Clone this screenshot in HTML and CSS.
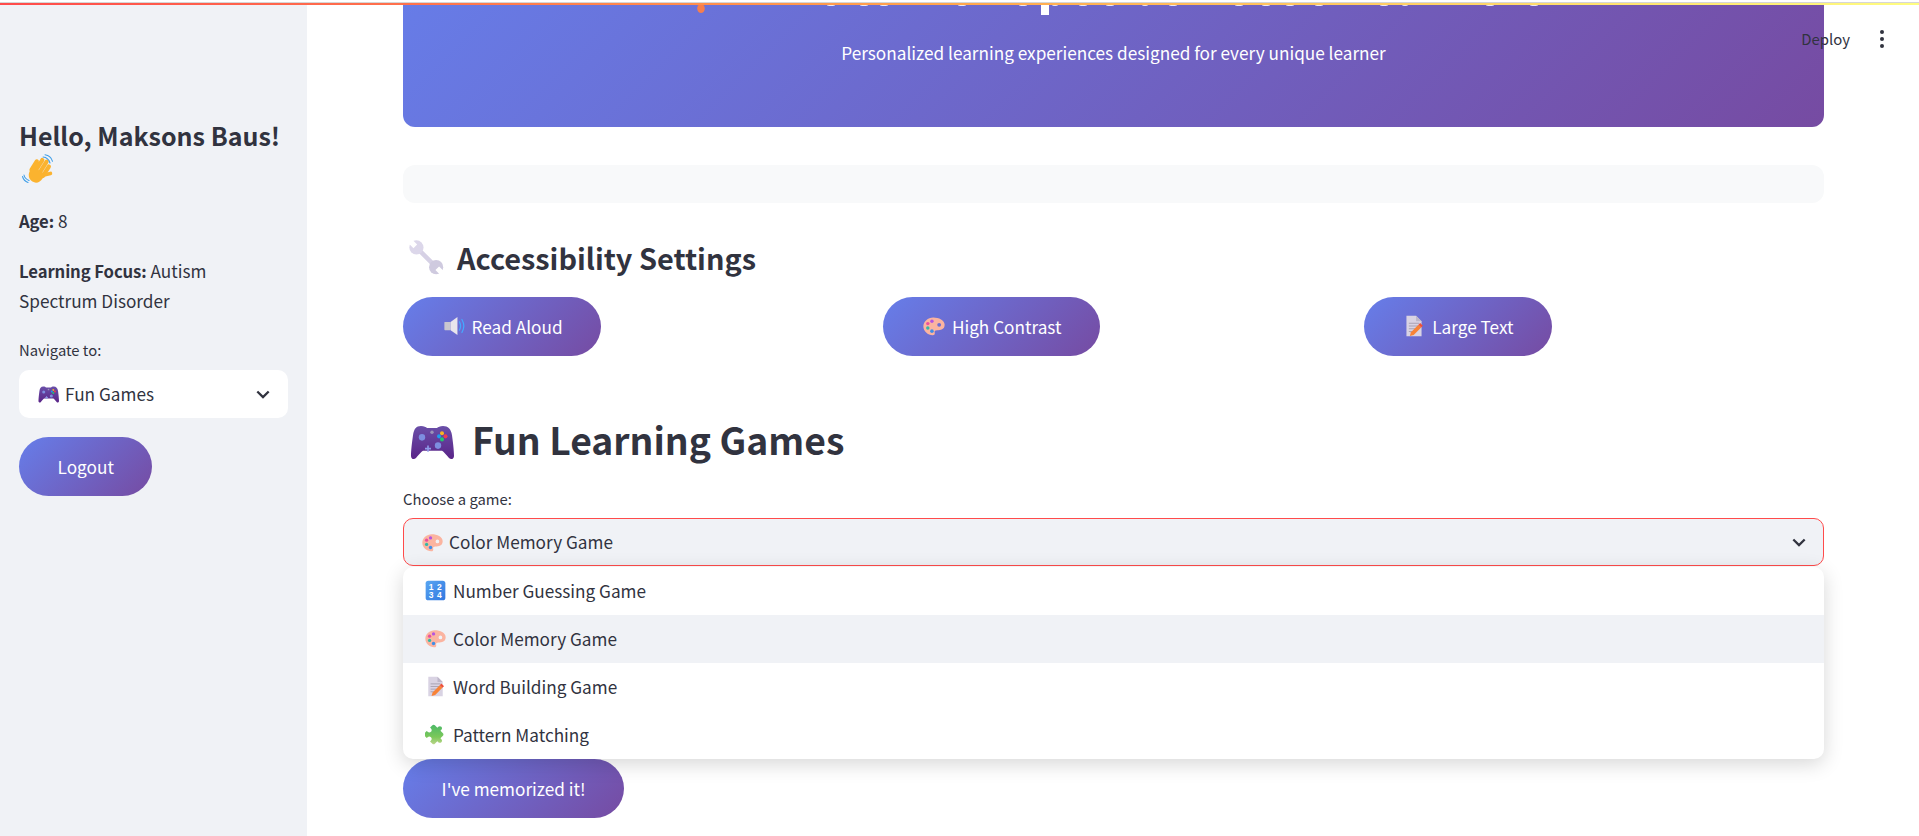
FILE: index.html
```html
<!DOCTYPE html>
<html lang="en">
<head>
<meta charset="utf-8">
<title>Fun Learning Games</title>
<link rel="stylesheet" href="styles.css">
</head>
<body>
<svg class="sprite" aria-hidden="true">
  <defs>
    <linearGradient id="padGrad" x1="0" y1="0" x2="0" y2="1"><stop offset="0" stop-color="#6a4fa8"/><stop offset="1" stop-color="#5a2488"/></linearGradient>
    <linearGradient id="numGrad" x1="0" y1="0" x2="1" y2="1"><stop offset="0" stop-color="#58a6f2"/><stop offset="1" stop-color="#3378e0"/></linearGradient>
    <linearGradient id="puzGrad" x1="0" y1="0" x2="1" y2="1"><stop offset="0" stop-color="#3fb56b"/><stop offset=".6" stop-color="#7cc85a"/><stop offset="1" stop-color="#d8dba0"/></linearGradient>
    <symbol id="i-wave" viewBox="0 0 32 32">
      <g transform="rotate(32 17 17)" stroke="#fbb32f" stroke-linecap="round" fill="none">
        <path d="M10 10v10M14 6v12M18.500 5v13M23 8v11" stroke-width="4.200"/>
        <path d="M9 20c0 6 3.500 9.500 8 9.500s7-3.500 7-8v-5H10z" fill="#fbb32f" stroke="none"/>
        <path d="M24 17l4-4" stroke-width="3.600"/>
      </g>
      <path d="M21 3c3 .3 6 2.500 7 6M23 .8c3.500.5 6.500 3 7.500 6.500M2 21c.5 2.500 2.500 4.500 5 5.500M.5 22.500c.8 3 3 5.200 5.500 6" fill="none" stroke="#3f9fe8" stroke-width="1.100" stroke-linecap="round"/>
    </symbol>
    <symbol id="i-wrench" viewBox="0 0 32 32">
      <path d="M8 8l17 17" stroke="#d6d1e5" stroke-width="4" stroke-linecap="round"/>
      <circle cx="7.500" cy="7.500" r="6.300" fill="#dcd7ea"/>
      <circle cx="25" cy="25" r="6.300" fill="#cfcadf"/>
      <path d="M6.500 6.500L0 0M26 26L32 32" stroke="#fff" stroke-width="4.600"/>
    </symbol>
    <symbol id="i-speaker" viewBox="0 0 32 32">
      <rect x="2" y="10" width="9" height="12" rx="1" fill="#c9c6cf"/>
      <path d="M11 10l10-7v26l-10-7z" fill="#e8e5ec"/>
      <path d="M24 10c2 4 2 8 0 12M27.500 6.500c3.500 6 3.500 13 0 19" fill="none" stroke="#45a8ff" stroke-width="1.800" stroke-linecap="round"/>
    </symbol>
    <symbol id="i-palette" viewBox="0 0 32 32">
      <path fill-rule="evenodd" d="M15 3.500C7 3.500.5 9.500.5 16.500S7 29.500 14 29.500c3 0 3.500-2 3-4-.6-2.300 1-3.500 3.500-3.500 5 0 11-1 11-8C31.500 7.500 23 3.500 15 3.500zM23.500 11.500a2.800 2.800 0 1 0 0 5.600 2.800 2.800 0 0 0 0-5.600z" fill="#fbb4a0"/>
      <circle cx="13" cy="9" r="2.500" fill="#b455e0"/><circle cx="7" cy="12.500" r="2.500" fill="#ec4f9c"/><circle cx="7" cy="19" r="2.500" fill="#35b8a5"/><circle cx="13" cy="23.500" r="2.600" fill="#3f8ee8"/>
    </symbol>
    <symbol id="i-doc" viewBox="0 0 32 32">
      <path d="M5 1h14l8 8v22H5z" fill="#d9d3e3"/><path d="M19 1l8 8h-8z" fill="#bdb6c9"/>
      <path d="M8.500 12h15M8.500 16h15M8.500 20h9M8.500 24h5" stroke="#a39cad" stroke-width="1.300"/>
      <path d="M10 30.500l1.500-5.500 11-11 4 4-11 11z" fill="#f88337"/><path d="M22.500 14l2.500-2.500 4 4-2.500 2.500z" fill="#ee4f3a"/>
    </symbol>
    <symbol id="i-pad" viewBox="0 0 44 34" preserveAspectRatio="none">
      <path d="M11 1c3 0 5 1 6 2h10c1-1 3-2 6-2 5 0 8 3 9 9 1 7 2 15 2 20 0 3-3 4-5 2-2-2-5-6-7-7H13c-2 1-5 5-7 7-2 2-5 1-5-2 0-5 1-13 2-20C4 4 6 1 11 1z" fill="url(#padGrad)"/>
      <circle cx="12" cy="12" r="3.200" fill="#7d8ee0"/><circle cx="28" cy="20" r="3.200" fill="#7d8ee0"/>
      <path d="M18 20v6M15 23h6" stroke="#8f9cea" stroke-width="1.600"/>
      <circle cx="22" cy="7" r="1.700" fill="#9a93b8"/>
      <circle cx="32" cy="8" r="2" fill="#f6b621"/><circle cx="29" cy="11" r="2" fill="#1f9cf0"/><circle cx="35.500" cy="11" r="2" fill="#ef3b4f"/><circle cx="32" cy="14" r="2" fill="#22c76f"/>
    </symbol>
    <symbol id="i-num" viewBox="0 0 32 32">
      <rect x="1" y="1" width="30" height="30" rx="4" fill="url(#numGrad)"/>
      <text x="9.500" y="14.500" class="num-text">1</text><text x="22" y="14.500" class="num-text">2</text>
      <text x="9.500" y="28" class="num-text">3</text><text x="22" y="28" class="num-text">4</text>
    </symbol>
    <symbol id="i-puz" viewBox="0 0 24 24">
      <path transform="rotate(45 12 12)" d="M20.500 11H19V7c0-1.100-.9-2-2-2h-4V3.500C13 2.120 11.880 1 10.500 1S8 2.120 8 3.500V5H4c-1.100 0-1.990.9-1.990 2v3.800H3.500c1.490 0 2.700 1.210 2.700 2.700s-1.210 2.700-2.700 2.700H2V20c0 1.100.9 2 2 2h3.800v-1.500c0-1.490 1.210-2.700 2.700-2.700 1.490 0 2.700 1.210 2.700 2.700V22H17c1.100 0 2-.9 2-2v-4h1.500c1.380 0 2.500-1.120 2.500-2.500S21.880 11 20.500 11z" fill="url(#puzGrad)"/>
    </symbol>
    <symbol id="i-chev" viewBox="0 0 16 10">
      <path d="M1.500 1.500l6.500 6.500 6.500-6.500" fill="none" stroke="#31333f" stroke-width="2.600"/>
    </symbol>
  </defs>
</svg>

<div class="top-strip"><div class="top-white"></div><div class="top-gray"></div><div class="top-rainbow"></div></div>

<svg class="title-marks" aria-hidden="true" width="1919" height="16" viewBox="0 0 1919 16">
  <ellipse cx="701" cy="8.500" rx="3.800" ry="4.500" fill="#f57e4e"/>
  <rect x="1041" y="5" width="8" height="10" fill="#fff"/>
  <g fill="#fff" fill-opacity=".85">
    <ellipse cx="831" cy="5" rx="4" ry="1"/><ellipse cx="864" cy="5" rx="4" ry="1"/><ellipse cx="884" cy="5" rx="4" ry="1"/><ellipse cx="962" cy="5" rx="4" ry="1"/><ellipse cx="1023" cy="5" rx="4" ry="1"/><ellipse cx="1055" cy="5" rx="3" ry="1"/><ellipse cx="1083" cy="5" rx="4" ry="1"/><ellipse cx="1110" cy="5" rx="4" ry="1"/><ellipse cx="1145" cy="5" rx="3" ry="1"/><ellipse cx="1173" cy="5" rx="4" ry="1"/><ellipse cx="1239" cy="5" rx="4" ry="1"/><ellipse cx="1266" cy="5" rx="4" ry="1"/><ellipse cx="1290" cy="5" rx="4" ry="1"/><ellipse cx="1319" cy="5" rx="4" ry="1"/><ellipse cx="1384" cy="5" rx="4" ry="1"/><ellipse cx="1405" cy="5" rx="3" ry="1"/><ellipse cx="1490" cy="5" rx="4" ry="1"/><ellipse cx="1534" cy="5" rx="4" ry="1"/>
  </g>
</svg>

<div class="toolbar">
  <span class="deploy">Deploy</span>
  <span class="kebab"><i></i><i></i><i></i></span>
</div>

<div class="app">
  <aside class="sidebar">
    <h3 class="hello">Hello, Maksons Baus!<br><svg class="ic-wave"><use href="#i-wave"/></svg></h3>
    <p class="info age"><strong>Age:</strong> 8</p>
    <p class="info focus"><strong>Learning Focus:</strong> Autism Spectrum Disorder</p>
    <label class="field-label nav-label">Navigate to:</label>
    <div class="select select-white">
      <svg class="ic-pad-small"><use href="#i-pad"/></svg>
      <span class="select-text-near">Fun Games</span>
      <svg class="chev"><use href="#i-chev"/></svg>
    </div>
    <button class="btn logout">Logout</button>
  </aside>

  <main class="main">
    <section class="banner">
      <p class="subtitle">Personalized learning experiences designed for every unique learner</p>
    </section>
    <div class="empty-bar"></div>

    <h2 class="h-access"><svg class="ic-wrench"><use href="#i-wrench"/></svg>Accessibility Settings</h2>
    <div class="btn-row">
      <div><button class="btn btn-icon"><svg class="ic-btn"><use href="#i-speaker"/></svg>Read Aloud</button></div>
      <div><button class="btn btn-icon"><svg class="ic-btn"><use href="#i-palette"/></svg>High Contrast</button></div>
      <div><button class="btn btn-icon"><svg class="ic-btn"><use href="#i-doc"/></svg>Large Text</button></div>
    </div>

    <h1 class="h-games"><svg class="ic-pad-big"><use href="#i-pad"/></svg>Fun Learning Games</h1>
    <label class="field-label game-label">Choose a game:</label>
    <div class="select-wrap">
      <div class="select select-open">
        <svg class="ic-item ic-selected"><use href="#i-palette"/></svg>
        <span class="select-text">Color Memory Game</span>
        <svg class="chev"><use href="#i-chev"/></svg>
      </div>
      <ul class="menu">
        <li class="menu-item"><svg class="ic-item"><use href="#i-num"/></svg>Number Guessing Game</li>
        <li class="menu-item active"><svg class="ic-item"><use href="#i-palette"/></svg>Color Memory Game</li>
        <li class="menu-item"><svg class="ic-item"><use href="#i-doc"/></svg>Word Building Game</li>
        <li class="menu-item"><svg class="ic-item"><use href="#i-puz"/></svg>Pattern Matching</li>
      </ul>
    </div>
    <button class="btn memorized">I've memorized it!</button>
  </main>
</div>
</body>
</html>
```

FILE: styles.css
```css
* { box-sizing: border-box; }
html, body { margin: 0; height: 100%; overflow: hidden; }
body {
  font-family: "Noto Sans CJK SC", "Lato", "Liberation Sans", sans-serif;
  color: #31333f;
  font-size: 17.200px;
  background: #fff;
}
.sprite { position: absolute; width: 0; height: 0; }
.num-text { font: bold 13px "Liberation Sans", sans-serif; fill: #fff; text-anchor: middle; }

.top-strip { height: 5px; position: relative; z-index: 3; }
.top-white { height: 2px; background: #fff; }
.top-gray { height: 1px; background: #d6d6d6; }
.top-rainbow { height: 2px; background: linear-gradient(90deg, #ff4b4b, #ffa64d 50%, #fffd80); }

.title-marks { position: absolute; left: 0; top: 0; z-index: 2; }

.toolbar {
  position: absolute; top: 25px; right: 35px; z-index: 4;
  display: flex; align-items: center; gap: 30px; height: 28px;
}
.deploy { font-size: 14.900px; line-height: 28px; }
.kebab { display: flex; flex-direction: column; gap: 3px; width: 4px; }
.kebab i { width: 4px; height: 4px; border-radius: 50%; background: #31333f; display: block; }

.app { display: flex; height: calc(100vh - 5px); }
.sidebar {
  width: 307px; flex: none; background: #f0f2f6;
  padding: 111px 19px 0 19px;
}
.hello {
  margin: 0; font-size: 25px; line-height: 38px; font-weight: 600; white-space: nowrap;
}
.ic-wave { width: 32px; height: 32px; display: block; margin: 0 0 1px 3px; }
.info { margin: 0; line-height: 30.700px; }
.info strong { font-weight: 600; font-size: .97em; letter-spacing: -.1px; }
.info.age { margin-top: 20px; }
.info.focus { margin-top: 19px; }
.field-label { display: block; font-size: 14.800px; line-height: 22px; }
.nav-label { margin-top: 22px; }

.select {
  display: flex; align-items: center; height: 48px; border-radius: 10px;
}
.select-white { background: #fff; margin-top: 9px; padding: 0 18px 0 19px; }
.ic-pad-small { width: 21px; height: 17px; flex: none; margin-right: 6px; }
.select-text-near { flex: 1; padding-bottom: 1px; }
.chev { width: 14px; height: 9px; flex: none; }

.btn {
  border: 0; color: #fff; font: inherit; cursor: pointer;
  height: 59px; padding: 0 38.600px 1px; border-radius: 30px;
  background: linear-gradient(135deg, #667eea, #764ba2);
}
.logout { display: block; margin-top: 19px; }
.btn-icon { display: inline-flex; align-items: center; }
.ic-btn { width: 22px; height: 22px; margin: 0 7px 0 1px; flex: none; }

.main { flex: 1; min-width: 0; padding: 0 95px 0 96px; }
.banner {
  height: 122px; padding-top: 36px; text-align: center; color: #fff;
  border-radius: 0 0 12px 12px;
  background: linear-gradient(135deg, #667eea, #764ba2) bottom / 100% 190px no-repeat;
}
.subtitle { margin: 0; line-height: 24px; }
.empty-bar { margin-top: 38px; height: 38px; background: #f8f9fa; border-radius: 12px; }

.h-access {
  margin: 33px 0 0; padding-bottom: 2px; display: flex; align-items: center; height: 44px;
  font-size: 28.900px; font-weight: 600; line-height: 42px;
}
.ic-wrench { width: 36px; height: 36px; margin: 0 13px 0 5px; flex: none; }
.btn-row {
  margin-top: 17px; display: grid; grid-template-columns: repeat(3, 1fr); gap: 20px;
}
.h-games {
  margin: 56px 0 0; padding-bottom: 2px; display: flex; align-items: center; height: 56px;
  font-size: 37.300px; font-weight: 600; line-height: 54px;
}
.ic-pad-big { width: 44px; height: 35px; margin: 7px 18px 0 7px; flex: none; }
.game-label { margin-top: 20px; }

.select-wrap { position: relative; margin-top: 8px; }
.select-open {
  background: #f0f2f6; border: 1px solid #ff4b4b; padding: 0 17px 0 18px;
}
.ic-item { width: 21px; height: 21px; flex: none; margin-right: 7px; }
.ic-selected { margin-right: 6px; }
.select-text { flex: 1; padding-bottom: 1px; }
.menu {
  position: absolute; left: 0; right: 0; top: 49px; z-index: 5;
  list-style: none; margin: 0; padding: 0; background: #fff; border-radius: 10px;
  box-shadow: 0 5px 20px rgba(0, 0, 0, .16);
  overflow: hidden;
}
.menu-item {
  height: 48px; display: flex; align-items: center; padding: 0 0 1px 22px;
}
.menu-item.active { background: #f0f2f6; }
.memorized { display: block; margin-top: 193px; }
```
